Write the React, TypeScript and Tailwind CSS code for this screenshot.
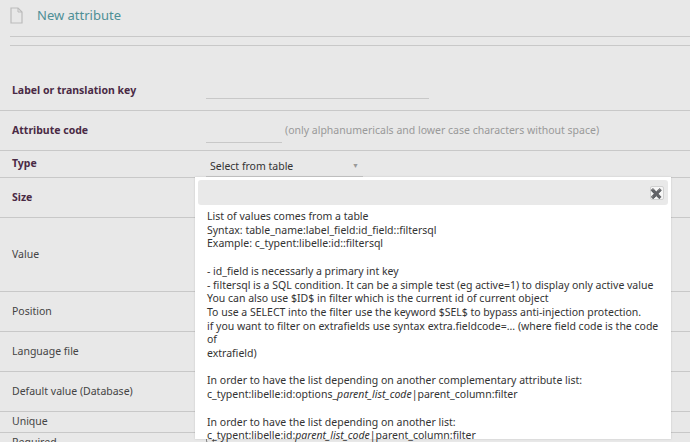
import React from "react";

function Row({ label, bold, h, children }: { label: string; bold?: boolean; h: string; children?: React.ReactNode }) {
  return (
    <div className={`flex items-center border-b border-[#c8c8c8] ${h}`}>
      <div className={`w-[206px] shrink-0 pl-[12px] text-[10.5px] ${bold ? "font-bold text-[#4a2a45]" : "text-[#444]"}`}>{label}</div>
      <div className="flex-1 flex items-center">{children}</div>
    </div>
  );
}

export default function App() {
  return (
    <div className="relative w-[690px] h-[442px] overflow-hidden bg-[#e8e8e8] font-['Liberation_Sans',Arial,sans-serif]">
      <div className="flex items-center h-[31px] pl-[10px]">
        <svg width="13" height="17" viewBox="0 0 13 17" className="mr-[14px]">
          <path d="M1 1h7l4 4v11H1z" fill="none" stroke="#bbb" strokeWidth="1.2" />
          <path d="M8 1v4h4" fill="none" stroke="#bbb" strokeWidth="1" />
        </svg>
        <span className="text-[13px] text-[#4e8f96]">New attribute</span>
      </div>
      <div className="ml-[10px] border-t border-[#c8c8c8] mt-[5px]" />
      <div className="ml-[10px] border-t border-[#c8c8c8] mt-[8px]" />
      <div className="mt-[19px]">
        <Row label="Label or translation key" bold h="h-[46px] pt-[6px]">
          <div className="w-[223px] mt-[16px] border-b border-[#c8c8c8]" />
        </Row>
        <Row label="Attribute code" bold h="h-[40px]">
          <div className="w-[76px] h-[19px] border-b border-[#c8c8c8] mt-[6px]" />
          <span className="ml-[3px] text-[10.5px] text-[#999]">(only alphanumericals and lower case characters without space)</span>
        </Row>
        <Row label="Type" bold h="h-[27px]">
          <div className="w-[157px] h-[20px] border-b border-[#c8c8c8] flex items-center justify-between pl-[4px] pr-[4px] mt-[6px]">
            <span className="text-[10.5px] text-[#333]">Select from table</span>
            <span className="text-[7px] text-[#999]">▼</span>
          </div>
        </Row>
        <Row label="Size" bold h="h-[40px]" />
        <Row label="Value" h="h-[74px]" />
        <Row label="Position" h="h-[40px]" />
        <Row label="Language file" h="h-[40px]" />
        <Row label="Default value (Database)" h="h-[40px]" />
        <Row label="Unique" h="h-[21px]" />
        <Row label="Required" h="h-[21px]">
          <div className="w-[8px] h-[8px] border border-[#888] rounded-[2px] -mt-[8px]" />
        </Row>
      </div>

      <div className="absolute left-[195px] top-[177px] w-[476px] h-[262px] bg-white shadow-[0_0_2px_rgba(0,0,0,0.15)] p-[3px]">
        <div className="h-[25px] bg-[#e9e9e9] rounded-[3px] flex items-center justify-end pr-[4px]">
          <div className="w-[14px] h-[14px] bg-[#f6f6f6] border border-[#d0d0d0] rounded-[2px] flex items-center justify-center text-[10px] font-bold text-[#666] leading-none">✖</div>
        </div>
        <div className="pl-[9px] pt-[5px] text-[10.5px] leading-[13.7px] text-[#333]">
          <div>List of values comes from a table</div>
          <div>Syntax: table_name:label_field:id_field::filtersql</div>
          <div>Example: c_typent:libelle:id::filtersql</div>
          <div>&nbsp;</div>
          <div>- id_field is necessarly a primary int key</div>
          <div>- filtersql is a SQL condition. It can be a simple test (eg active=1) to display only active value</div>
          <div>You can also use $ID$ in filter which is the current id of current object</div>
          <div>To use a SELECT into the filter use the keyword $SEL$ to bypass anti-injection protection.</div>
          <div>if you want to filter on extrafields use syntax extra.fieldcode=... (where field code is the code of</div>
          <div>extrafield)</div>
          <div>&nbsp;</div>
          <div>In order to have the list depending on another complementary attribute list:</div>
          <div>c_typent:libelle:id:options_<i>parent_list_code</i>|parent_column:filter</div>
          <div>&nbsp;</div>
          <div>In order to have the list depending on another list:</div>
          <div>c_typent:libelle:id:<i>parent_list_code</i>|parent_column:filter</div>
        </div>
      </div>
    </div>
  );
}
